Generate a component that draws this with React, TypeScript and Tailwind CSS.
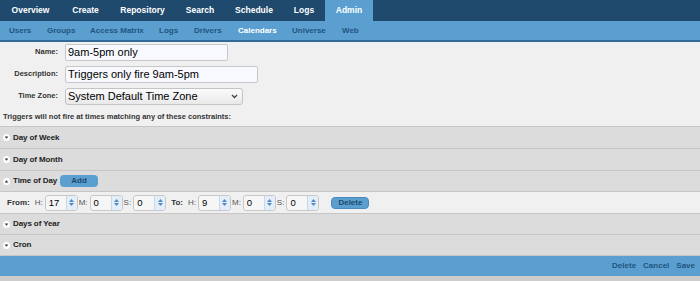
import React from 'react';

const font = { fontFamily: '"Liberation Sans", Arial, sans-serif' };

const tabs = [
  { label: 'Overview', w: 'w-[61px]' },
  { label: 'Create', w: 'w-[49px]' },
  { label: 'Repository', w: 'w-[65px]' },
  { label: 'Search', w: 'w-[50px]' },
  { label: 'Schedule', w: 'w-[58px]' },
  { label: 'Logs', w: 'w-[42px]' },
  { label: 'Admin', w: 'w-[48px]', active: true },
];

const subTabs = [
  { label: 'Users', w: 'w-[38px]' },
  { label: 'Groups', w: 'w-[43px]' },
  { label: 'Access Matrix', w: 'w-[69px]' },
  { label: 'Logs', w: 'w-[35px]' },
  { label: 'Drivers', w: 'w-[44px]' },
  { label: 'Calendars', w: 'w-[54px]', active: true },
  { label: 'Universe', w: 'w-[50px]' },
  { label: 'Web', w: 'w-[30px]' },
];

const Toggle = ({ open }: { open?: boolean }) => (
  <span className="w-[7px] h-[7px] rounded-full bg-white flex items-center justify-center">
    <svg width="5" height="5" viewBox="0 0 5 5">
      {open ? <path d="M0.7 3.4 L2.5 1.3 L4.3 3.4 Z" fill="#333" /> : <path d="M0.7 1.6 L2.5 3.7 L4.3 1.6 Z" fill="#333" />}
    </svg>
  </span>
);

const Section = ({ title, open, h, children }: { title: string; open?: boolean; h: string; children?: React.ReactNode }) => (
  <div className={`${h} bg-[#dcdcdc] border-b border-[#c6c6c6] flex items-center pl-[3px] gap-[3px]`}>
    <Toggle open={open} />
    <span className="text-[8px] font-bold text-[#222] tracking-[-0.1px]">{title}</span>
    {children}
  </div>
);

const Spin = ({ value }: { value: string }) => (
  <div className="w-[33px] h-[16px] flex border border-[#c8c8c8] rounded-[3px] bg-[#f6f6f6] overflow-hidden">
    <span className="flex-1 text-[9.5px] leading-[14px] pl-[3px] text-black">{value}</span>
    <span className="w-[11px] bg-[#e4eefa] border-l border-[#c8d8ea] flex flex-col items-center justify-center gap-[1px]">
      <svg width="5" height="3" viewBox="0 0 5 3"><path d="M0 3 L2.5 0 L5 3 Z" fill="#4f8ac0" /></svg>
      <svg width="5" height="3" viewBox="0 0 5 3"><path d="M0 0 L2.5 3 L5 0 Z" fill="#4f8ac0" /></svg>
    </span>
  </div>
);

const Lbl = ({ t }: { t: string }) => <span className="text-[8px] text-[#555] ml-[1px] mr-[2px]">{t}</span>;

export default function App() {
  return (
    <div className="w-[700px] h-[281px] bg-[#cccccc] overflow-hidden" style={font}>
      <div className="h-[21px] bg-[#1f4a6d] flex">
        {tabs.map((t) => (
          <div
            key={t.label}
            className={`${t.w} h-full flex items-center justify-center text-[8.5px] font-bold text-white ${t.active ? 'bg-[#5a9fcf]' : ''}`}
          >
            {t.label}
          </div>
        ))}
      </div>
      <div className="h-[21px] bg-[#5a9fcf] flex items-center pl-[9px] border-b-2 border-[#2f6a98]">
        {subTabs.map((s) => (
          <span key={s.label} className={`${s.w} shrink-0 text-[8px] font-bold ${s.active ? 'text-white' : 'text-[#22557f]'}`}>
            {s.label}
          </span>
        ))}
      </div>
      <div className="bg-[#f0f0f0] h-[85px] border-b border-[#c6c6c6] flex flex-col pt-[1px]">
        <div className="flex items-center h-[18px] gap-[7px]">
          <span className="w-[58px] text-right text-[7.5px] font-bold text-[#333]">Name:</span>
          <div className="w-[163px] h-[17px] bg-[#f7f9ff] border border-[#c8c8c8] rounded-[2px] text-[11px] leading-[15px] pl-[2px] text-black">9am-5pm only</div>
        </div>
        <div className="flex items-center h-[18px] gap-[7px] mt-[4px]">
          <span className="w-[58px] text-right text-[7.5px] font-bold text-[#333]">Description:</span>
          <div className="w-[193px] h-[17px] bg-[#f7f9ff] border border-[#c8c8c8] rounded-[2px] text-[11px] leading-[15px] pl-[2px] text-black">Triggers only fire 9am-5pm</div>
        </div>
        <div className="flex items-center h-[18px] gap-[7px] mt-[4px]">
          <span className="w-[58px] text-right text-[7.5px] font-bold text-[#333]">Time Zone:</span>
          <div className="w-[178px] h-[17px] bg-gradient-to-b from-[#fbfbfb] to-[#e9e9e9] border border-[#c4c4c4] rounded-[3px] text-[11px] leading-[15px] pl-[2px] pr-[4px] text-black flex items-center justify-between">
            <span>System Default Time Zone</span>
            <svg width="7" height="5" viewBox="0 0 7 5"><path d="M1 1 L3.5 3.5 L6 1" stroke="#444" strokeWidth="1.3" fill="none" /></svg>
          </div>
        </div>
        <div className="text-[7.5px] font-bold text-[#333] pl-[3px] mt-[6px]">Triggers will not fire at times matching any of these constraints:</div>
      </div>
      <Section title="Day of Week" h="h-[22px]" />
      <Section title="Day of Month" h="h-[22px]" />
      <Section title="Time of Day" h="h-[21px]" open>
        <span className="w-[38px] h-[12px] rounded-[4px] bg-[#5a9fcf] text-[8px] font-bold text-[#1f4a6d] flex items-center justify-center">Add</span>
      </Section>
      <div className="h-[22px] bg-[#f0f0f0] border-b border-[#c6c6c6] flex items-center pl-[7px]">
        <span className="text-[8px] font-bold text-[#333] mr-[4px]">From:</span>
        <Lbl t="H:" />
        <Spin value="17" />
        <Lbl t="M:" />
        <Spin value="0" />
        <Lbl t="S:" />
        <Spin value="0" />
        <span className="text-[8px] font-bold text-[#333] ml-[5px] mr-[4px]">To:</span>
        <Lbl t="H:" />
        <Spin value="9" />
        <Lbl t="M:" />
        <Spin value="0" />
        <Lbl t="S:" />
        <Spin value="0" />
        <span className="ml-[12px] w-[38px] h-[12px] rounded-[4px] bg-[#5a9fcf] border border-[#4a8abd] text-[8px] font-bold text-[#1f4a6d] flex items-center justify-center">Delete</span>
      </div>
      <Section title="Days of Year" h="h-[21px]" />
      <Section title="Cron" h="h-[21px]" />
      <div className="h-[20px] bg-[#5a9fcf] flex items-center justify-end gap-[7px] pr-[5px]">
        {['Delete', 'Cancel', 'Save'].map((a) => (
          <span key={a} className="text-[8px] font-bold text-[#22557f]">{a}</span>
        ))}
      </div>
    </div>
  );
}
